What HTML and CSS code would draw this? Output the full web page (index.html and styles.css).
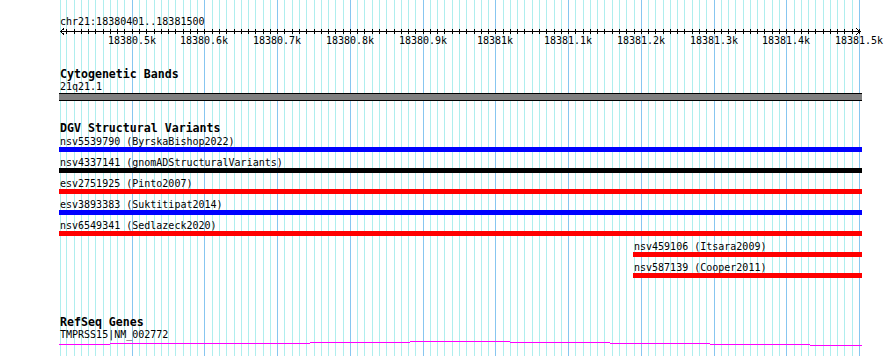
FILE: index.html
```html
<!DOCTYPE html>
<html lang="en">
<head>
  <meta charset="UTF-8">
  <title>chr21:18380401..18381500</title>
  <link rel="stylesheet" href="styles.css">
</head>
<body>
  <div class="panel">
    <svg class="grid" id="grid" width="890" height="356"></svg>

    <div class="chrom">chr21:18380401..18381500</div>
    <svg class="scale" id="scale" width="890" height="20"></svg>

    <div class="track cyto">
      <div class="track-title">Cytogenetic Bands</div>
      <div class="band-label">21q21.1</div>
      <div class="band"></div>
    </div>

    <div class="track dgv">
      <div class="track-title">DGV Structural Variants</div>
      <div class="rows">
        <div class="feature">
          <div class="feature-label">nsv5539790 (ByrskaBishop2022)</div>
          <div class="bar blue"></div>
        </div>
        <div class="feature">
          <div class="feature-label">nsv4337141 (gnomADStructuralVariants)</div>
          <div class="bar black"></div>
        </div>
        <div class="feature">
          <div class="feature-label">esv2751925 (Pinto2007)</div>
          <div class="bar red"></div>
        </div>
        <div class="feature">
          <div class="feature-label">esv3893383 (Suktitipat2014)</div>
          <div class="bar blue"></div>
        </div>
        <div class="feature">
          <div class="feature-label">nsv6549341 (Sedlazeck2020)</div>
          <div class="bar red"></div>
        </div>
        <div class="feature" style="margin-left:574px">
          <div class="feature-label">nsv459106 (Itsara2009)</div>
          <div class="bar red" style="width:229px"></div>
        </div>
        <div class="feature" style="margin-left:574px">
          <div class="feature-label">nsv587139 (Cooper2011)</div>
          <div class="bar red" style="width:229px"></div>
        </div>
      </div>
    </div>

    <div class="track genes">
      <div class="track-title">RefSeq Genes</div>
      <div class="feature-label">TMPRSS15|NM_002772</div>
      <svg class="intron" width="803" height="8">
        <rect x="0" y="4" width="51" height="1"/>
        <rect x="51" y="3" width="100" height="1"/>
        <rect x="151" y="3" width="100" height="1"/>
        <rect x="251" y="2" width="100" height="1"/>
        <rect x="351" y="1" width="100" height="1"/>
        <rect x="451" y="2" width="100" height="1"/>
        <rect x="551" y="3" width="100" height="1"/>
        <rect x="651" y="4" width="100" height="1"/>
        <rect x="751" y="5" width="52" height="1"/>
      </svg>
    </div>
  </div>

  <script>
    // 1100 bp (18380400..18381500) over 800 px, starting at x = 59
    const left = 59;
    const step = 800 / 110;
    const ns = 'http://www.w3.org/2000/svg';

    function rect(parent, x, y, w, h, cls) {
      const r = document.createElementNS(ns, 'rect');
      r.setAttribute('x', x);
      r.setAttribute('y', y);
      r.setAttribute('width', w);
      r.setAttribute('height', h);
      if (cls) r.setAttribute('class', cls);
      parent.appendChild(r);
    }

    const grid = document.getElementById('grid');
    const scale = document.getElementById('scale');

    for (let k = 0; k <= 110; k++) {
      const x = Math.round(left + k * step);
      const major = k > 0 && k % 10 === 0;
      rect(grid, k === 0 ? x + 1 : x, 0, 1, 356, major ? 'major' : 'minor');
      if (k > 0) rect(scale, x, 2, 1, 5, 'tick');
      if (major) {
        const t = document.createElementNS(ns, 'text');
        const kb = 18380.4 + k / 100;
        t.setAttribute('x', x);
        t.setAttribute('y', 17);
        t.textContent = (Math.round(kb * 10) / 10) + 'k';
        scale.appendChild(t);
      }
    }

    // ruler line and arrow heads
    rect(scale, 60, 4, 801, 1, 'tick');
    const arrows = document.createElementNS(ns, 'path');
    arrows.setAttribute('d', 'M64 1.5 L60.5 4.5 L64 7.5 M856 1.5 L860.5 4.5 L856 7.5');
    arrows.setAttribute('class', 'arrow');
    scale.appendChild(arrows);
  </script>
</body>
</html>
```

FILE: styles.css
```css
body {
  margin: 0;
  background: #fff;
  color: #000;
  font-family: "DejaVu Sans Mono", monospace;
  font-size: 10px;
}
.panel {
  position: relative;
  width: 890px;
  height: 356px;
  overflow: hidden;
}
.grid {
  position: absolute;
  top: 0;
  left: 0;
  shape-rendering: crispEdges;
}
.grid .minor {
  fill: #afeeee;
}
.grid .major {
  fill: #87c6f0;
}
.chrom {
  position: relative;
  padding: 16px 0 0 60px;
  line-height: 11px;
}
.scale {
  position: relative;
  display: block;
  shape-rendering: crispEdges;
}
.scale .tick {
  fill: #000;
}
.scale .arrow {
  fill: none;
  stroke: #000;
  stroke-width: 1;
}
.scale text {
  font-family: "DejaVu Sans Mono", monospace;
  font-size: 10px;
  text-anchor: middle;
  fill: #000;
}
.track {
  position: relative;
  width: 803px;
  padding-left: 59px;
}
.track-title {
  padding-left: 1px;
  font-size: 11.6px;
  font-weight: bold;
  line-height: 12px;
}
.cyto {
  margin-top: 21px;
}
.band-label {
  margin-top: 1px;
  padding-left: 1px;
  line-height: 11px;
}
.band {
  margin-top: 1px;
  height: 6px;
  border-top: 1px solid #000;
  border-bottom: 1px solid #000;
  background: #808080;
}
.dgv {
  margin-top: 21px;
}
.rows {
  margin-top: 2px;
}
.feature {
  height: 21px;
}
.feature-label {
  padding-left: 1px;
  line-height: 11px;
  white-space: nowrap;
}
.bar {
  height: 5px;
}
.bar.blue {
  background: #0000ff;
}
.bar.red {
  background: #ff0000;
}
.bar.black {
  background: #000;
}
.genes {
  margin-top: 33px;
}
.genes .feature-label {
  margin-top: 1px;
}
.intron {
  display: block;
  fill: #ff00ff;
  shape-rendering: crispEdges;
}
```
